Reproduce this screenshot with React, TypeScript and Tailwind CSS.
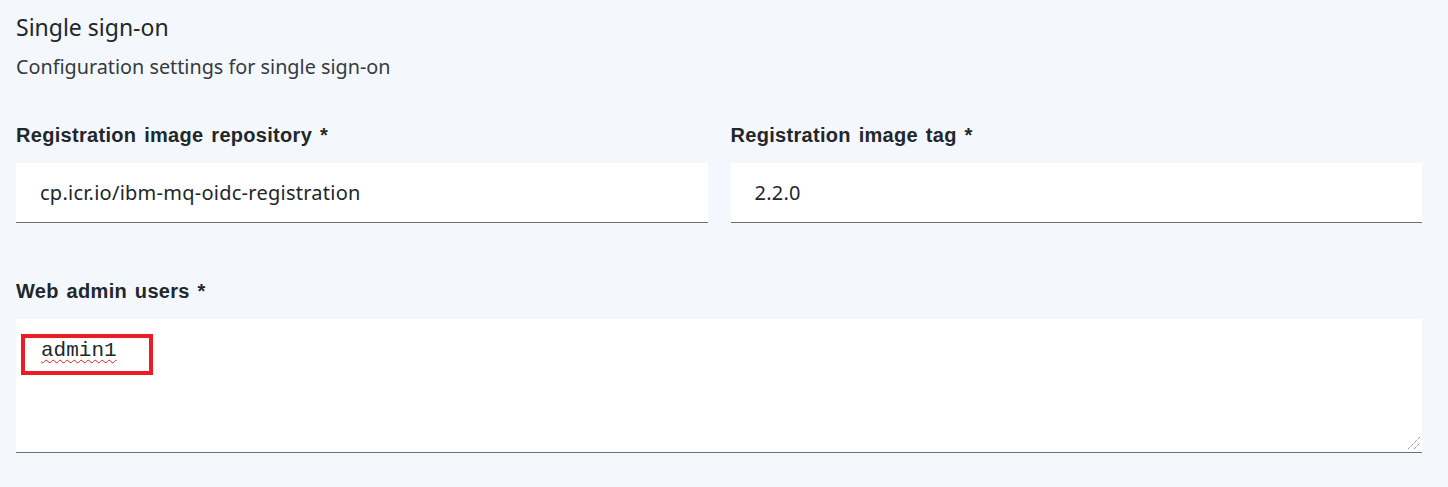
import React from "react";

const sans = { fontFamily: '"Noto Sans", "Open Sans", sans-serif' };

function Label({ children }: { children: React.ReactNode }) {
  return (
    <label className="h-6 text-[20px] leading-6 font-bold tracking-[0.3px] [word-spacing:2px] text-[#21272a] font-['Liberation_Sans',Arial,sans-serif]">
      {children}
    </label>
  );
}

function Field({ label, value }: { label: string; value: string }) {
  return (
    <div className="flex flex-col">
      <Label>{label}</Label>
      <div className="mt-4 flex h-[60px] items-center border-b border-[#697077] bg-white px-6">
        <span className="text-[20px] tracking-[0.25px] text-[#21272a] font-['Noto_Sans',sans-serif]">{value}</span>
      </div>
    </div>
  );
}

export default function App() {
  return (
    <div className="min-h-[487px] w-full bg-[#f4f7fb] pl-4 pr-[26px] pt-[13px]" style={sans}>
      <h1 className="h-7 text-[23px] leading-7 font-normal text-[#21272a]">Single sign-on</h1>
      <p className="mt-[14px] h-6 text-[19.8px] leading-6 text-[#343a3f]">Configuration settings for single sign-on</p>

      <div className="mt-[44px] grid grid-cols-2 gap-x-[23px]">
        <Field label="Registration image repository *" value="cp.icr.io/ibm-mq-oidc-registration" />
        <Field label="Registration image tag *" value="2.2.0" />
      </div>

      <div className="mt-[56px] flex flex-col">
        <Label>Web admin users *</Label>
        <div className="relative mt-4 h-[134px] border-b border-[#697077] bg-white">
          <div className="pl-[25px] pt-[20px] text-[21px] leading-6 text-[#21272a] font-['Liberation_Mono',monospace]">
            <span className="underline decoration-wavy decoration-[#e02020] decoration-1 underline-offset-[3px]">admin1</span>
          </div>
          <div className="absolute left-[5px] top-[15px] h-[41px] w-[132px] border-4 border-[#ed1c24]" />
          <svg className="absolute bottom-[2px] right-[1px]" width="14" height="14" viewBox="0 0 14 14">
            <line x1="1" y1="13" x2="13" y2="1" stroke="#6b6b6b" strokeWidth="1" strokeDasharray="1 1" />
            <line x1="7" y1="13" x2="13" y2="7" stroke="#6b6b6b" strokeWidth="1" strokeDasharray="1 1" />
          </svg>
        </div>
      </div>
    </div>
  );
}
